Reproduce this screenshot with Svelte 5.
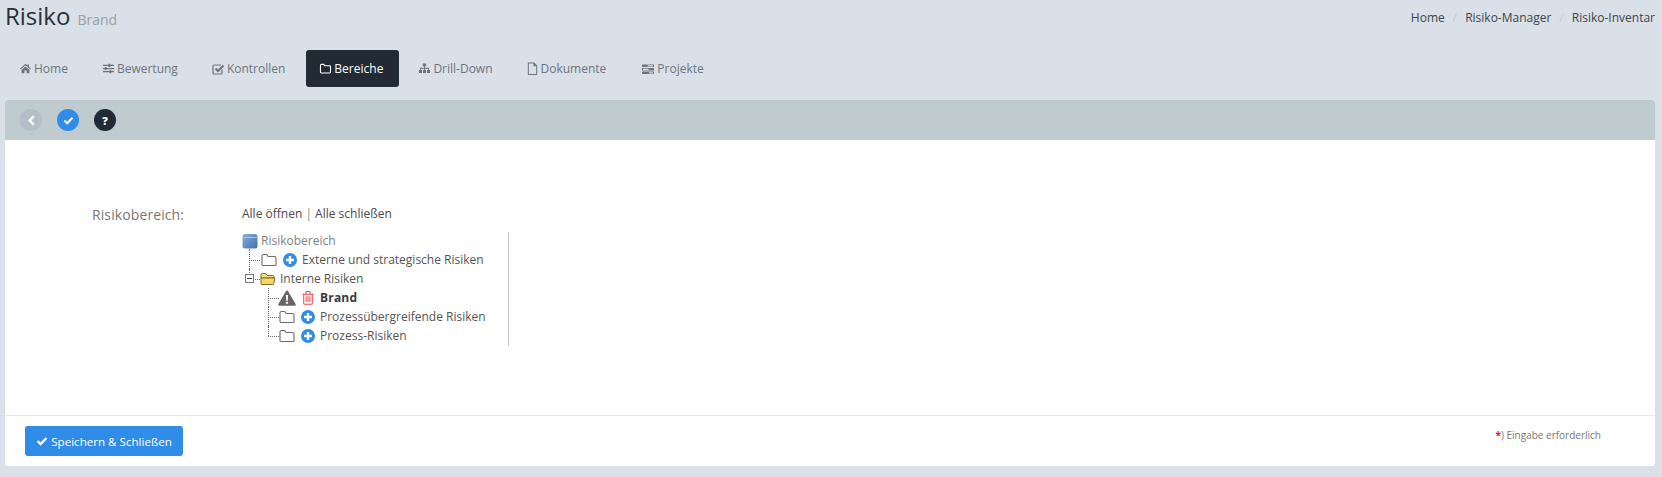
<script>
  const navItems = [
    { label: 'Home', icon: 'home' },
    { label: 'Bewertung', icon: 'sliders' },
    { label: 'Kontrollen', icon: 'check' },
    { label: 'Bereiche', icon: 'folder', active: true },
    { label: 'Drill-Down', icon: 'sitemap' },
    { label: 'Dokumente', icon: 'file' },
    { label: 'Projekte', icon: 'tasks' }
  ];
  const crumbs = ['Home', 'Risiko-Manager', 'Risiko-Inventar'];
</script>

{#snippet navIcon(name)}
  <svg class="nav-icon" class:wide={name === 'check' || name === 'tasks'} viewBox="0 0 14 14" aria-hidden="true">
    {#if name === 'home'}
      <path fill="currentColor" d="M7 2 1 7.200l.7.800L7 3.600 12.300 8l.7-.8-2.200-1.900V2.600H9.200v1.300zM2.800 8.400V12.200h3V9.200h2.400v3h3V8.400L7 4.900z"/>
    {:else if name === 'sliders'}
      <path fill="currentColor" d="M1 3h6V2h2v1h4v1.300H9v1H7v-1H1zM1 6.400h2v-1h2v1h8v1.300H5v1H3v-1H1zM1 9.800h7v-1h2v1h3v1.300h-3v1H8v-1H1z"/>
    {:else if name === 'check'}
      <path fill="none" stroke="currentColor" stroke-width="1.200" d="M11 7.500V11a1 1 0 0 1-1 1H3a1 1 0 0 1-1-1V4a1 1 0 0 1 1-1h7"/>
      <path fill="none" stroke="currentColor" stroke-width="2" d="M4.500 6.500 7 9l5.500-5.500"/>
    {:else if name === 'folder'}
      <path fill="none" stroke="currentColor" stroke-width="1.200" d="M1.600 3.600a1 1 0 0 1 1-1h2.600l1 1.400h5.200a1 1 0 0 1 1 1v5.800a1 1 0 0 1-1 1H2.600a1 1 0 0 1-1-1z"/>
    {:else if name === 'sitemap'}
      <path fill="currentColor" d="M5.200 1.500h3.600v3H7.500v1.700h4.300v2.300h1.200v3.300H9.700V8.500h1.100V7.200H7.500v1.300h1.100v3.300H5.400V8.500h1.100V7.200H3.200v1.300h1.100v3.300H1V8.500h1.200V6.200h4.300V4.500H5.200z"/>
    {:else if name === 'file'}
      <path fill="none" stroke="currentColor" stroke-width="1.100" d="M2.500 1h6l3 3v9.500h-9zM8.500 1v3h3"/>
    {:else}
      <path fill="currentColor" d="M1 2.500h12v2.600H1zM1 6h12v2.600H1zM1 9.500h12v2.600H1z"/>
      <path fill="#d9e0e8" d="M6.500 3.200H12v1.200H6.500zM2 6.700h5.500v1.200H2zM8 10.200h4v1.200H8z"/>
    {/if}
  </svg>
{/snippet}

{#snippet plus()}
  <svg class="tree-action" viewBox="0 0 14 14" aria-hidden="true">
    <circle cx="7" cy="7" r="7" fill="#318ce7"/>
    <path fill="#fff" d="M5.800 3h2.400v2.800H11v2.400H8.200V11H5.800V8.200H3V5.800h2.800z"/>
  </svg>
{/snippet}

{#snippet folder()}
  <svg class="tree-folder" viewBox="0 0 16 14" aria-hidden="true">
    <path fill="#fff" stroke="#6f6a66" stroke-width="1.100" d="M1 3a1.500 1.500 0 0 1 1.500-1.500h3.200L7.200 3.500h6.300A1.500 1.500 0 0 1 15 5v6.500a1 1 0 0 1-1 1H2a1 1 0 0 1-1-1z"/>
  </svg>
{/snippet}

<div class="page">
  <header class="top">
    <div class="title"><h1>Risiko</h1><small>Brand</small></div>
    <ol class="crumbs">
      {#each crumbs as c, i}
        {#if i > 0}<li class="sep">/</li>{/if}
        <li>{c}</li>
      {/each}
    </ol>
  </header>

  <nav class="nav">
    {#each navItems as item}
      <span class="nav-item" class:active={item.active}>
        {@render navIcon(item.icon)}{item.label}
      </span>
    {/each}
  </nav>

  <main class="panel">
    <div class="toolbar">
      <span class="round back">
        <svg viewBox="0 0 10 12" width="9" height="11"><path d="M7.500 1.500 3 6l4.500 4.500" fill="none" stroke="#fff" stroke-width="2.600"/></svg>
      </span>
      <span class="round ok">
        <svg viewBox="0 0 12 10" width="11" height="9"><path d="M1.500 5 4.500 8 10.500 2" fill="none" stroke="#fff" stroke-width="2.400"/></svg>
      </span>
      <span class="round help">?</span>
    </div>

    <div class="body">
      <div class="label">Risikobereich:</div>
      <div class="field">
        <div class="toggle">Alle öffnen <span class="bar">|</span> Alle schließen</div>
        <div class="tree">
          <div class="row root">
            <svg class="tree-db" viewBox="0 0 16 16" aria-hidden="true">
              <defs><linearGradient id="db" x1="0" x2="1" y1="0" y2="1"><stop offset="0" stop-color="#8eb0dc"/><stop offset="1" stop-color="#3f6fae"/></linearGradient></defs>
              <rect x="0.500" y="1" width="15" height="14.500" rx="2.500" fill="url(#db)"/>
              <path d="M1 4.500h14" stroke="#a9c2e4" stroke-width="1"/>
            </svg>
            <span class="muted">Risikobereich</span>
          </div>
          <div class="row lvl1 branch">
            {@render folder()}{@render plus()}<span>Externe und strategische Risiken</span>
          </div>
          <div class="row lvl1 branch parent">
            <span class="expander"></span>
            <svg class="tree-folder open" viewBox="0 0 16 14" aria-hidden="true">
              <path fill="#f6e08a" stroke="#7a6a2c" stroke-width="1" d="M1 3a1.500 1.500 0 0 1 1.500-1.500h3L7 3.500h5.500A1.500 1.500 0 0 1 14 5v1H1z"/>
              <path fill="#f7d65a" stroke="#7a6a2c" stroke-width="1" d="M1 6h14l-1.300 5.500a1 1 0 0 1-1 1H2a1 1 0 0 1-1-1z"/>
            </svg>
            <span>Interne Risiken</span>
          </div>
          <div class="row lvl2 branch">
            <svg class="tree-warn" viewBox="0 0 18 16" aria-hidden="true">
              <path fill="#666" d="M9 .5a1.300 1.300 0 0 1 1.100.7l7.500 12.800a1.200 1.200 0 0 1-1 1.800H1.400a1.200 1.200 0 0 1-1-1.800L7.900 1.200A1.300 1.300 0 0 1 9 .5z"/>
              <path fill="#fff" d="M7.900 5h2.200l-.3 5.800H8.200zM7.900 11.800h2.200v2H7.900z"/>
            </svg>
            <svg class="tree-trash" viewBox="0 0 14 16" aria-hidden="true">
              <path fill="none" stroke="#f2464b" stroke-width="1.200" d="M.5 3.500h13M4.500 3.500v-2a1 1 0 0 1 1-1h3a1 1 0 0 1 1 1v2M2 3.500V14a1.300 1.300 0 0 0 1.300 1.300h7.400A1.300 1.300 0 0 0 12 14V3.500M4.800 6v6.800M7 6v6.800M9.200 6v6.800"/>
            </svg>
            <strong>Brand</strong>
          </div>
          <div class="row lvl2 branch">
            {@render folder()}{@render plus()}<span>Prozessübergreifende Risiken</span>
          </div>
          <div class="row lvl2 branch last">
            {@render folder()}{@render plus()}<span>Prozess-Risiken</span>
          </div>
        </div>
      </div>
    </div>

    <footer class="footer">
      <button class="save" type="button">
        <svg viewBox="0 0 12 10" width="12" height="10"><path d="M1.500 5 4.500 8 10.500 2" fill="none" stroke="#fff" stroke-width="2.400"/></svg>
        Speichern &amp; Schließen
      </button>
      <div class="req"><b>*</b>) Eingabe erforderlich</div>
    </footer>
  </main>
</div>

<style>
  :global(body) {
    margin: 0;
    background: #d9e0e8;
    font-family: "Open Sans", sans-serif;
    font-size: 12px;
    color: #5b5b5b;
  }
  .page { height: 477px; overflow: hidden; }

  .top {
    display: flex;
    justify-content: space-between;
    align-items: flex-start;
    height: 50px;
    padding: 0 7px 0 5px;
  }
  .title { display: flex; align-items: baseline; gap: 7px; margin-top: -1px; }
  h1 { margin: 0; font-size: 24px; line-height: 33px; font-weight: 400; color: #2a3038; }
  small { font-size: 14px; color: #98a0a8; }
  .crumbs {
    display: flex;
    list-style: none;
    margin: 9px 0 0;
    padding: 0;
    color: #3f444c;
    font-size: 12px;
    line-height: 17px;
  }
  .sep { color: #c5ccd3; padding: 0 8px; }

  .nav { display: flex; align-items: center; padding-left: 4px; height: 37px; }
  .nav-item {
    display: flex;
    align-items: center;
    height: 37px;
    box-sizing: border-box;
    padding: 0 14px 0 15px;
    margin-right: 4px;
    border-radius: 3px;
    color: #6f747b;
    white-space: nowrap;
  }
  .nav-item:nth-child(2) { margin-left: 1px; }
  .nav-item.active {
    background: #222b35;
    color: #fff;
    margin-left: 3px;
    padding: 0 16px 0 13px;
  }
  .nav-icon { width: 13px; height: 13px; margin-right: 2px; flex: none; }
  .nav-icon.wide { width: 14px; height: 14px; }
  .nav-item:last-child { margin-left: 2px; }

  .panel {
    margin: 13px 7px 0 5px;
    height: 366px;
    display: flex;
    flex-direction: column;
    background: #fff;
    border-radius: 3px;
    overflow: hidden;
  }
  .toolbar {
    height: 40px;
    flex: none;
    background: #c0cbd0;
    display: flex;
    align-items: center;
    padding-left: 15px;
    gap: 15px;
  }
  .round {
    width: 22px;
    height: 22px;
    border-radius: 50%;
    display: flex;
    align-items: center;
    justify-content: center;
    color: #fff;
  }
  .back { background: #b3bfc6; }
  .ok { background: #318ce7; }
  .help { background: #222b35; font-weight: 800; font-size: 11px; }

  .body { flex: 1; display: flex; padding: 65px 0 0 87px; min-height: 0; }
  .label { width: 150px; font-size: 14px; letter-spacing: .1px; line-height: 19px; color: #7b7775; }
  .toggle { color: #4a4a4a; line-height: 17px; }
  .bar { color: #888; }
  .tree {
    margin-top: 10px;
    width: 266px;
    height: 114px;
    border-right: 1px solid #c9c9c9;
    color: #555;
    position: relative;
  }
  .row { height: 19px; display: flex; align-items: center; white-space: nowrap; position: relative; }
  .root { top: -1px; }
  .muted { color: #7e8288; margin-left: 3px; }
  .lvl1 { padding-left: 19px; top: -1px; }
  .lvl2 { padding-left: 37px; top: -1px; }
  .tree-db { width: 16px; height: 16px; }
  .tree-folder { width: 16px; height: 14px; flex: none; }
  .tree-folder.open { margin: 0 4px 0 -1px; }
  .tree-action { width: 14px; height: 14px; margin: 1px 5px 0 6px; flex: none; }
  .tree-warn { width: 18px; height: 16px; margin-left: -1px; }
  .tree-trash { width: 12px; height: 16px; margin: 0 6px 0 6px; }
  strong { color: #3a3a3a; letter-spacing: .2px; }

  .branch::before {
    content: "";
    position: absolute;
    top: 50%;
    border-top: 1px dotted #666;
    width: 11px;
    left: 7px;
  }
  .lvl2.branch::before { left: 26px; }
  .lvl1.branch::after, .lvl2.branch::after {
    content: "";
    position: absolute;
    border-left: 1px dotted #666;
    left: 7px;
    top: -1px;
    height: 20px;
  }
  .lvl1.parent::after { top: 0; height: 6px; }
  .lvl2.branch::after { left: 26px; top: 0; height: 19px; }
  .lvl2.last::after { height: 10px; }
  .expander {
    position: absolute;
    left: 3px;
    top: 5px;
    width: 7px;
    height: 7px;
    background: linear-gradient(#444, #444) center/5px 1px no-repeat, #fff;
    border: 1px solid #777;
    z-index: 1;
  }

  .footer {
    height: 51px;
    flex: none;
    box-sizing: border-box;
    border-top: 1px solid #e6e9ec;
    display: flex;
    justify-content: space-between;
    align-items: flex-start;
    padding: 10px 54px 0 20px;
  }
  .save {
    height: 30px;
    width: 158px;
    border: 0;
    border-radius: 3px;
    background: #318ce7;
    color: #fff;
    font: 11.600px "Open Sans", sans-serif;
    display: flex;
    align-items: center;
    justify-content: center;
    gap: 3px;
  }
  .req { font-size: 10px; color: #777; margin-top: 2px; }
  .req b { color: #d9222a; }
</style>
